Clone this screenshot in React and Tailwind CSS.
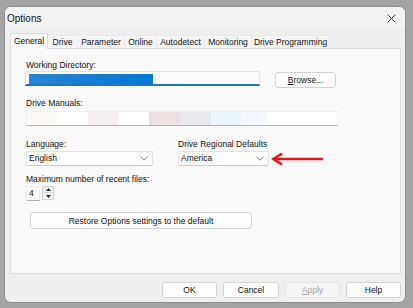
import React from "react";

const tabs = [
  { label: "General", w: "w-[38px]", active: true },
  { label: "Drive", w: "w-[30px]" },
  { label: "Parameter", w: "w-[47px]" },
  { label: "Online", w: "w-[32px]" },
  { label: "Autodetect", w: "w-[48px]" },
  { label: "Monitoring", w: "w-[47px]" },
  { label: "Drive Programming", w: "w-[78px]" },
];

// redacted blur blocks in the Drive Manuals field
const manualBlocks = [
  "w-[30px] bg-[#fcf9f5]",
  "w-[31px] bg-[#ffffff]",
  "w-[31px] bg-[#f5efef]",
  "w-[30px] bg-[#ffffff]",
  "w-[31px] bg-[#ecdfe0]",
  "w-[31px] bg-[#e9eaf0]",
  "w-[30px] bg-[#eaf5fd]",
  "w-[26px] bg-[#f3f9fe]",
];

function Chevron() {
  return (
    <svg width="8" height="5" viewBox="0 0 8 5" className="shrink-0">
      <path d="M0.5 0.8 L4 4.2 L7.5 0.8" fill="none" stroke="#7a7a7a" strokeWidth="1" />
    </svg>
  );
}

function Select({ value, className }) {
  return (
    <div
      className={`h-[15px] flex items-center justify-between pl-[2px] pr-[4px] bg-[#fdfdfd] border border-[#e2e2e2] border-b-[#c9c9c9] rounded-[2px] ${className}`}
    >
      <span className="leading-[13px]">{value}</span>
      <Chevron />
    </div>
  );
}

function Button({ children, className = "", disabled }) {
  return (
    <div
      className={`h-[16px] flex items-center justify-center rounded-[3px] border leading-[14px] ${
        disabled
          ? "bg-[#f5f5f5] border-[#e6e6e6] text-[#a3a3a3]"
          : "bg-[#fdfdfd] border-[#d3d3d3]"
      } ${className}`}
    >
      {children}
    </div>
  );
}

export default function App() {
  return (
    <div className="w-[413px] h-[308px] bg-[#a4a4a4] pt-[6px] pl-[4px] font-['Liberation_Sans',Arial,sans-serif] text-[8.5px] text-[#111]">
      <div className="w-[402px] h-[297px] bg-[#efefef] rounded-[7px] border border-[#8e8e8e] flex flex-col overflow-hidden">
        {/* title bar */}
        <div className="h-[21px] shrink-0 flex items-center justify-between pl-[2px] pr-[9px] bg-[#f3f3f3]">
          <span className="text-[10px] leading-[12px] pt-[2px]">Options</span>
          <svg width="9" height="9" viewBox="0 0 9 9" className="mt-[2px]">
            <path d="M0.5 0.5 L8.5 8.5 M8.5 0.5 L0.5 8.5" stroke="#333" strokeWidth="1" />
          </svg>
        </div>

        {/* tabs */}
        <div className="h-[15px] mt-[5px] ml-[5px] flex items-start shrink-0">
          {tabs.map((t) =>
            t.active ? (
              <div
                key={t.label}
                className={`${t.w} relative z-10 h-[16px] bg-[#f9f9f9] border border-b-0 border-[#dadada] flex items-center justify-center leading-[12px] pb-[2px]`}
              >
                {t.label}
              </div>
            ) : (
              <div
                key={t.label}
                className={`${t.w} mt-[2px] h-[13px] bg-[#f5f5f5] border-r border-t border-[#e9e9e9] flex items-center justify-center leading-[12px]`}
              >
                {t.label}
              </div>
            )
          )}
        </div>

        {/* tab panel */}
        <div className="w-[391px] h-[226px] ml-[5px] bg-[#f9f9f9] border border-[#dadada] px-[15px] shrink-0">
          <div className="mt-[11px] h-[11px] leading-[11px]">Working Directory:</div>
          <div className="flex items-start">
            <div className="-ml-px w-[235px] h-[15px] bg-[#fbfbfb] border border-[#e3e3e3] border-b-[2px] border-b-[#1f73c8] pl-[3px] pt-[2px]">
              <div className="w-[124px] h-[10px] bg-[linear-gradient(90deg,#2a86d6_0%,#1f7fd4_30%,#137bd6_60%,#0478d8_100%)]" />
            </div>
            <Button className="ml-[15px] mt-[1px] w-[61px]">
              <span>
                <span className="underline">B</span>rowse...
              </span>
            </Button>
          </div>

          <div className="mt-[10px] h-[11px] leading-[11px]">Drive Manuals:</div>
          <div className="mt-[2px] w-[312px] h-[15px] flex bg-white border border-[#f0f0f0] border-b-[#b5b5b5]">
            {manualBlocks.map((c, i) => (
              <div key={i} className={`h-full ${c}`} />
            ))}
          </div>

          <div className="mt-[13px] flex">
            <div className="w-[152px]">
              <div className="h-[11px] leading-[11px]">Language:</div>
              <Select value="English" className="mt-[1px] w-[127px]" />
            </div>
            <div>
              <div className="h-[11px] leading-[11px]">Drive Regional Defaults</div>
              <div className="mt-[1px] flex items-center">
                <Select value="America" className="w-[91px]" />
                <svg width="52" height="14" viewBox="0 0 52 14" className="ml-[2px]">
                  <path d="M11 1.5 L2.5 7 L11 12.5" fill="none" stroke="#e3151f" strokeWidth="2.6" strokeLinejoin="miter" />
                  <path d="M3 7 L51 7" stroke="#e3151f" strokeWidth="2.6" strokeLinecap="round" />
                </svg>
              </div>
            </div>
          </div>

          <div className="mt-[8px] h-[11px] leading-[11px]">Maximum number of recent files:</div>
          <div className="mt-[1px] flex items-start">
            <div className="w-[14px] h-[15px] bg-[#fdfdfd] border border-[#ececec] border-b-[#b0b0b0] pl-[2px] leading-[13px]">
              4
            </div>
            <div className="ml-[2px] w-[12px] h-[14px] flex flex-col border border-[#cfcfcf] bg-[#f7f7f7]">
              <div className="h-[6px] flex items-center justify-center border-b border-[#d8d8d8]">
                <svg width="5" height="3" viewBox="0 0 5 3">
                  <path d="M0 3 L2.5 0 L5 3 Z" fill="#222" />
                </svg>
              </div>
              <div className="flex-1 flex items-center justify-center">
                <svg width="5" height="3" viewBox="0 0 5 3">
                  <path d="M0 0 L2.5 3 L5 0 Z" fill="#222" />
                </svg>
              </div>
            </div>
          </div>

          <Button className="mt-[11px] ml-[4px] w-[222px] h-[17px]">
            Restore Options settings to the default
          </Button>
        </div>

        {/* footer buttons */}
        <div className="mt-[8px] ml-[157px] flex gap-[6px]">
          <Button className="w-[55px] border-[#5a9de0]">OK</Button>
          <Button className="w-[56px]">Cancel</Button>
          <Button className="w-[55px]" disabled>
            <span>
              <span className="underline">A</span>pply
            </span>
          </Button>
          <Button className="w-[55px]">Help</Button>
        </div>
      </div>
    </div>
  );
}
